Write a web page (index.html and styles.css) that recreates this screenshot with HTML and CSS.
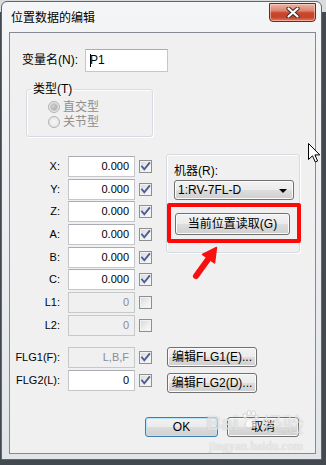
FILE: index.html
```html
<!DOCTYPE html>
<html>
<head>
<meta charset="utf-8">
<link rel="stylesheet" href="styles.css">
</head>
<body>
<div class="window">
  <div class="titlebar">
    <span class="title">位置数据的编辑</span>
    <div class="close">
      <svg width="14" height="11" viewBox="0 0 14 11">
        <path d="M2.5 1.5 L11.5 9.5 M11.5 1.5 L2.5 9.5" stroke="#3a3030" stroke-width="4.2" stroke-linecap="round"/>
        <path d="M2.5 1.5 L11.5 9.5 M11.5 1.5 L2.5 9.5" stroke="#ffffff" stroke-width="2.2" stroke-linecap="round"/>
      </svg>
    </div>
  </div>
  <div class="client">
    <div class="name-row">
      <span class="name-label">变量名(N):</span>
      <div class="edit name-edit"><span class="caret"></span>P1</div>
    </div>

    <fieldset class="type-group">
      <legend>类型(T)</legend>
      <div class="radio-row"><span class="radio on"></span><span class="radio-text">直交型</span></div>
      <div class="radio-row"><span class="radio"></span><span class="radio-text">关节型</span></div>
    </fieldset>

    <div class="coords">
      <span class="lab">X:</span><div class="edit">0.000</div><span class="check on"><svg viewBox="0 0 11 11"><path d="M2 5.5 L4.3 8.3 L9.3 2.2"/></svg></span>
      <span class="lab">Y:</span><div class="edit">0.000</div><span class="check on"><svg viewBox="0 0 11 11"><path d="M2 5.5 L4.3 8.3 L9.3 2.2"/></svg></span>
      <span class="lab">Z:</span><div class="edit">0.000</div><span class="check on"><svg viewBox="0 0 11 11"><path d="M2 5.5 L4.3 8.3 L9.3 2.2"/></svg></span>
      <span class="lab">A:</span><div class="edit">0.000</div><span class="check on"><svg viewBox="0 0 11 11"><path d="M2 5.5 L4.3 8.3 L9.3 2.2"/></svg></span>
      <span class="lab">B:</span><div class="edit">0.000</div><span class="check on"><svg viewBox="0 0 11 11"><path d="M2 5.5 L4.3 8.3 L9.3 2.2"/></svg></span>
      <span class="lab">C:</span><div class="edit">0.000</div><span class="check on"><svg viewBox="0 0 11 11"><path d="M2 5.5 L4.3 8.3 L9.3 2.2"/></svg></span>
      <span class="lab">L1:</span><div class="edit disabled">0</div><span class="check"></span>
      <span class="lab">L2:</span><div class="edit disabled">0</div><span class="check"></span>

      <div class="robot">
        <div class="robot-label">机器(R):</div>
        <div class="combo"><span>1:RV-7FL-D</span><span class="combo-arrow"></span></div>
        <div class="btn read-btn">当前位置读取(G)</div>
        <div class="highlight"></div>
      </div>
    </div>

    <div class="flags">
      <span class="lab">FLG1(F):</span><div class="edit disabled">L,B,F</div><span class="check on"><svg viewBox="0 0 11 11"><path d="M2 5.5 L4.3 8.3 L9.3 2.2"/></svg></span><div class="btn flag-btn">编辑FLG1(E)...</div>
      <span class="lab">FLG2(L):</span><div class="edit">0</div><span class="check on"><svg viewBox="0 0 11 11"><path d="M2 5.5 L4.3 8.3 L9.3 2.2"/></svg></span><div class="btn flag-btn second">编辑FLG2(D)...</div>
    </div>

    <div class="actions">
      <div class="btn ok-btn">OK</div>
      <div class="btn cancel-btn">取消</div>
    </div>

    <svg class="arrow" width="36" height="36" viewBox="0 0 36 36">
      <path d="M6 32 L19 14" stroke="#f81010" stroke-width="6" stroke-linecap="round"/>
      <path d="M26.5 3.5 L24.5 19 L12.5 10.5 Z" fill="#f81010" stroke="#f81010" stroke-width="1.5" stroke-linejoin="round"/>
    </svg>
  </div>
</div>

<div class="watermark">
  <div class="wm-top">
    <span class="wm-bai">Bai</span>
    <svg class="wm-paw" width="18" height="20" viewBox="0 0 18 20">
      <g fill="#ffffff" stroke="#b9b9b9" stroke-width="0.8">
        <ellipse cx="4" cy="6" rx="2" ry="2.6"/>
        <ellipse cx="8" cy="3" rx="2" ry="2.6"/>
        <ellipse cx="12.5" cy="3.4" rx="2" ry="2.6"/>
        <ellipse cx="15.5" cy="7.5" rx="1.8" ry="2.4"/>
        <path d="M4 15 C4 10 8 8.5 10 8.5 C12.5 8.5 15.5 11 15.5 15 C15.5 18 12 18.5 10 17.5 C8 18.5 4 18 4 15 Z"/>
      </g>
    </svg>
    <span class="wm-jy">经验</span>
  </div>
  <div class="wm-url">jingyan.baidu.com</div>
</div>

<svg class="cursor" width="13" height="20" viewBox="0 0 13 20">
  <path d="M0.5 0.5 L0.5 16.5 L4.5 12.8 L7.3 19 L9.6 18 L6.9 11.9 L11.8 11.9 Z" fill="#ffffff" stroke="#000000" stroke-width="1" stroke-linejoin="miter"/>
</svg>
</body>
</html>
```

FILE: styles.css
```css
* {
  box-sizing: border-box;
}

html, body {
  margin: 0;
  padding: 0;
}

body {
  position: relative;
  width: 326px;
  height: 465px;
  overflow: hidden;
  background: linear-gradient(#d9dbdd 0, #d9dbdd 12px, #434950 12px);
  font-family: "Liberation Sans", "Noto Sans CJK SC", sans-serif;
  font-size: 12px;
  line-height: 16px;
  color: #000;
}

/* window frame */
.window {
  margin: 1px 0 0 1px;
  width: 321px;
  height: 459px;
  border: 1px solid #62676c;
  border-radius: 6px 6px 0 0;
  background: linear-gradient(#f4f5f7, #e2e5e8);
  padding: 0 5px 5px 7px;
  display: flex;
  flex-direction: column;
}

.titlebar {
  height: 30px;
  flex: none;
  display: flex;
  justify-content: space-between;
  align-items: flex-start;
}

.title {
  margin-top: 7px;
  padding-left: 2px;
  font-family: "Noto Sans CJK SC", sans-serif;
  font-size: 12px;
  line-height: 16px;
}

.close {
  margin-top: 1px;
  width: 47px;
  height: 19px;
  border: 1px solid #6b2a1e;
  border-radius: 0 0 4px 4px;
  background: linear-gradient(#ecb4a6 0%, #dc8470 40%, #c9472d 52%, #c6442b 78%, #de7b5e 100%);
  box-shadow: inset 0 0 0 1px rgba(255, 220, 210, 0.55);
  display: flex;
  align-items: center;
  justify-content: center;
}

.close svg {
  display: block;
  margin-top: -1px;
}

/* client area */
.client {
  position: relative;
  flex: none;
  height: 422px;
  border: 1px solid #858a90;
  background: #f0f0f0;
  padding: 16px 16px 0 12px;
}

.name-row {
  display: flex;
  height: 23px;
}

.name-label {
  width: 63px;
  line-height: 23px;
}

.edit {
  height: 21px;
  border: 1px solid #c3c7cc;
  border-top-color: #a9adb3;
  background: #ffffff;
  font-size: 11px;
  line-height: 19px;
  text-align: right;
  padding-right: 5px;
  color: #000;
}

.edit.disabled {
  background: #f0f0f0;
  border-color: #c6c8ca;
  color: #8a8c96;
}

.name-edit {
  position: relative;
  width: 83px;
  height: 23px;
  line-height: 21px;
  text-align: left;
  padding-left: 4px;
  font-size: 12px;
}

.caret {
  position: absolute;
  left: 4px;
  top: 4px;
  width: 1px;
  height: 13px;
  background: #000;
}

/* type group */
.type-group {
  margin: 9px 0 0 4px;
  width: 127px;
  min-width: 0;
  border: 1px solid #d5dbe0;
  border-radius: 3px;
  padding: 2px 0 7px 0;
  box-shadow: 1px 1px 0 #fff, inset 1px 1px 0 #fff;
}

.type-group legend {
  margin-left: 4px;
  padding: 0 2px;
  font-size: 12px;
  line-height: 16px;
}

.radio-row {
  display: flex;
  align-items: center;
  height: 15px;
  padding-left: 21px;
}

.radio {
  position: relative;
  width: 12px;
  height: 12px;
  border-radius: 50%;
  border: 1px solid #b3b3b3;
  background: radial-gradient(circle at 50% 50%, #f7f7f7 0, #e9e9e9 60%, #dadada 100%);
}

.radio.on::after {
  content: "";
  position: absolute;
  left: 2px;
  top: 2px;
  width: 6px;
  height: 6px;
  border-radius: 50%;
  background: radial-gradient(circle at 40% 40%, #d2d2d2 0, #9c9c9c 100%);
  box-shadow: 0 0 0 1px #c9c9c9;
}

.radio-text {
  margin-left: 3px;
  color: #8d8d8d;
  font-size: 12px;
}

/* coordinate grid */
.coords {
  display: grid;
  grid-template-columns: 58px 67px 17px 148px;
  grid-template-rows: repeat(8, 22.7px);
  margin: 19px 0 0 -12px;
}

.flags {
  display: grid;
  grid-template-columns: 58px 67px 17px 148px;
  grid-template-rows: 23px 23px;
  margin: 9.4px 0 0 -12px;
}

.lab {
  grid-column: 1;
  align-self: start;
  text-align: right;
  padding-right: 8px;
  font-size: 11px;
  line-height: 21px;
  white-space: nowrap;
}

.coords .edit,
.flags .edit {
  align-self: start;
}

.check {
  align-self: start;
  margin: 4px 0 0 4px;
  width: 13px;
  height: 13px;
  border: 1px solid #8e8f8f;
  background: linear-gradient(135deg, #d3d6da 0%, #eeeeee 55%, #fafafa 100%);
  box-shadow: inset 0 0 0 1px #f2f2f2;
}

.check svg {
  display: block;
  width: 11px;
  height: 11px;
}

.check svg path {
  fill: none;
  stroke: #4a5c93;
  stroke-width: 1.9;
  stroke-linecap: square;
  stroke-linejoin: miter;
}

/* robot group */
.robot {
  grid-column: 4;
  grid-row: 1 / span 5;
  align-self: start;
  position: relative;
  margin: -2px 0 0 14px;
  width: 134px;
  height: 99px;
  border: 1px solid #d5dbe0;
  border-radius: 3px;
  padding: 8px 0 0 7px;
  box-shadow: 1px 1px 0 #fff, inset 1px 1px 0 #fff;
}

.robot-label {
  line-height: 16px;
}

.btn,
.combo {
  border: 1px solid #707070;
  border-radius: 3px;
  background: linear-gradient(#f2f2f2 0%, #ebebeb 50%, #dddddd 51%, #cfcfcf 100%);
  box-shadow: inset 0 0 0 1px #fbfbfb;
  font-size: 12px;
  text-align: center;
  white-space: nowrap;
}

.combo {
  margin-top: 1px;
  width: 120px;
  height: 20px;
  line-height: 18px;
  text-align: left;
  padding: 0 6px 0 3px;
  display: flex;
  justify-content: space-between;
  align-items: center;
}

.combo-arrow {
  width: 0;
  height: 0;
  border-left: 4px solid transparent;
  border-right: 4px solid transparent;
  border-top: 4px solid #000;
  margin-top: 1px;
}

.read-btn {
  margin: 13px 0 0 1px;
  width: 115px;
  height: 22px;
  line-height: 20px;
}

.highlight {
  position: absolute;
  left: 0;
  top: 48px;
  width: 134px;
  height: 40px;
  border: 4px solid #fc0a0a;
  border-radius: 2px;
}

.flag-btn {
  grid-column: 4;
  align-self: start;
  margin-left: 15px;
  width: 90px;
  height: 20px;
  line-height: 18px;
}

.flag-btn.second {
  margin-top: 3px;
}

/* bottom actions */
.actions {
  display: flex;
  justify-content: flex-end;
  gap: 9px;
  margin-top: 24px;
}

.ok-btn {
  width: 73px;
  height: 20px;
  line-height: 18px;
  border-color: #3c7fb1;
  box-shadow: inset 0 0 0 1px #b9e4f9;
}

.cancel-btn {
  width: 72px;
  height: 20px;
  line-height: 18px;
}

.arrow {
  position: absolute;
  left: 180px;
  top: 211px;
}

/* overlays */
.watermark {
  position: absolute;
  left: 206px;
  top: 408px;
  color: rgba(255, 255, 255, 0.6);
  text-shadow: 0 0 1px rgba(120, 120, 120, 0.45);
  pointer-events: none;
}

.wm-top {
  display: flex;
  align-items: flex-end;
}

.wm-bai {
  font-family: "Liberation Sans", sans-serif;
  font-weight: bold;
  font-size: 21px;
  line-height: 30px;
}

.wm-paw {
  margin: 0 3px 8px 2px;
  opacity: 0.6;
}

.wm-jy {
  font-family: "Noto Sans CJK SC", sans-serif;
  font-size: 21px;
  line-height: 30px;
}

.wm-url {
  font-family: "Liberation Serif", serif;
  font-size: 12px;
  line-height: 14px;
  margin-left: 3px;
  margin-top: 1px;
  letter-spacing: 0.3px;
}

.cursor {
  position: absolute;
  left: 308px;
  top: 143px;
}
```
